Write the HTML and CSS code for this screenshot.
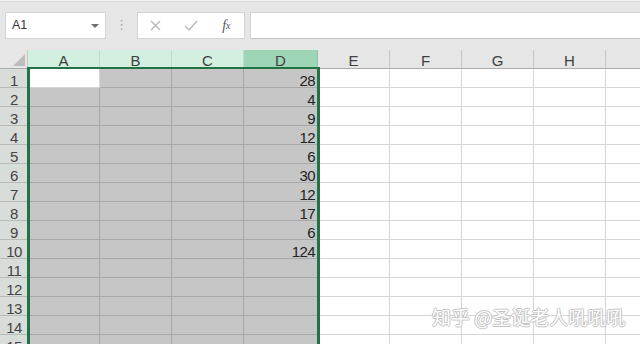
FILE: index.html
```html
<!DOCTYPE html>
<html lang="zh">
<head>
<meta charset="utf-8">
<title>Sheet</title>
<link rel="stylesheet" href="styles.css">
</head>
<body>
<div class="toolbar">
  <div class="namebox"><span class="ref">A1</span><span class="caret"></span></div>
  <div class="dots">⋮</div>
  <div class="fbtns">
    <span class="fb"><svg width="11" height="11" viewBox="0 0 11 11"><path d="M1 1L10 10M10 1L1 10" stroke="#b8b8b8" stroke-width="1.4" fill="none"/></svg></span>
    <span class="fb"><svg width="14" height="11" viewBox="0 0 14 11"><path d="M1 6L5 10L13 1" stroke="#b8b8b8" stroke-width="1.4" fill="none"/></svg></span>
    <span class="fb fx">f<sub>x</sub></span>
  </div>
  <div class="finput"></div>
</div>

<div class="sheet">
  <div class="row hdr">
    <div class="corner"><span class="tri"></span></div>
    <div class="ch g">A</div><div class="ch g">B</div><div class="ch g">C</div><div class="ch dg">D</div>
    <div class="ch">E</div><div class="ch">F</div><div class="ch">G</div><div class="ch">H</div><div class="ch last"></div>
  </div>
  <div class="row"><div class="rh">1</div><div class="cell"></div><div class="cell s"></div><div class="cell s"></div><div class="cell s num">28</div><div class="cell"></div><div class="cell"></div><div class="cell"></div><div class="cell"></div><div class="cell last"></div></div>
  <div class="row"><div class="rh">2</div><div class="cell s"></div><div class="cell s"></div><div class="cell s"></div><div class="cell s num">4</div><div class="cell"></div><div class="cell"></div><div class="cell"></div><div class="cell"></div><div class="cell last"></div></div>
  <div class="row"><div class="rh">3</div><div class="cell s"></div><div class="cell s"></div><div class="cell s"></div><div class="cell s num">9</div><div class="cell"></div><div class="cell"></div><div class="cell"></div><div class="cell"></div><div class="cell last"></div></div>
  <div class="row"><div class="rh">4</div><div class="cell s"></div><div class="cell s"></div><div class="cell s"></div><div class="cell s num">12</div><div class="cell"></div><div class="cell"></div><div class="cell"></div><div class="cell"></div><div class="cell last"></div></div>
  <div class="row"><div class="rh">5</div><div class="cell s"></div><div class="cell s"></div><div class="cell s"></div><div class="cell s num">6</div><div class="cell"></div><div class="cell"></div><div class="cell"></div><div class="cell"></div><div class="cell last"></div></div>
  <div class="row"><div class="rh">6</div><div class="cell s"></div><div class="cell s"></div><div class="cell s"></div><div class="cell s num">30</div><div class="cell"></div><div class="cell"></div><div class="cell"></div><div class="cell"></div><div class="cell last"></div></div>
  <div class="row"><div class="rh">7</div><div class="cell s"></div><div class="cell s"></div><div class="cell s"></div><div class="cell s num">12</div><div class="cell"></div><div class="cell"></div><div class="cell"></div><div class="cell"></div><div class="cell last"></div></div>
  <div class="row"><div class="rh">8</div><div class="cell s"></div><div class="cell s"></div><div class="cell s"></div><div class="cell s num">17</div><div class="cell"></div><div class="cell"></div><div class="cell"></div><div class="cell"></div><div class="cell last"></div></div>
  <div class="row"><div class="rh">9</div><div class="cell s"></div><div class="cell s"></div><div class="cell s"></div><div class="cell s num">6</div><div class="cell"></div><div class="cell"></div><div class="cell"></div><div class="cell"></div><div class="cell last"></div></div>
  <div class="row"><div class="rh">10</div><div class="cell s"></div><div class="cell s"></div><div class="cell s"></div><div class="cell s num">124</div><div class="cell"></div><div class="cell"></div><div class="cell"></div><div class="cell"></div><div class="cell last"></div></div>
  <div class="row"><div class="rh">11</div><div class="cell s"></div><div class="cell s"></div><div class="cell s"></div><div class="cell s"></div><div class="cell"></div><div class="cell"></div><div class="cell"></div><div class="cell"></div><div class="cell last"></div></div>
  <div class="row"><div class="rh">12</div><div class="cell s"></div><div class="cell s"></div><div class="cell s"></div><div class="cell s"></div><div class="cell"></div><div class="cell"></div><div class="cell"></div><div class="cell"></div><div class="cell last"></div></div>
  <div class="row"><div class="rh">13</div><div class="cell s"></div><div class="cell s"></div><div class="cell s"></div><div class="cell s"></div><div class="cell"></div><div class="cell"></div><div class="cell"></div><div class="cell"></div><div class="cell last"></div></div>
  <div class="row"><div class="rh">14</div><div class="cell s"></div><div class="cell s"></div><div class="cell s"></div><div class="cell s"></div><div class="cell"></div><div class="cell"></div><div class="cell"></div><div class="cell"></div><div class="cell last"></div></div>
  <div class="row"><div class="rh">15</div><div class="cell s"></div><div class="cell s"></div><div class="cell s"></div><div class="cell s"></div><div class="cell"></div><div class="cell"></div><div class="cell"></div><div class="cell"></div><div class="cell last"></div></div>
  <div class="selection"></div>
</div>

<div class="watermark">知乎 @圣诞老人吼吼吼</div>
</body>
</html>
```

FILE: styles.css
```css
* { box-sizing: border-box; }
html, body { margin: 0; padding: 0; }
body {
  width: 640px;
  height: 344px;
  overflow: hidden;
  position: relative;
  background: #fff;
  font-family: "Liberation Sans", Arial, sans-serif;
  color: #333;
}

.toolbar {
  height: 50px;
  padding: 12px 0 0 5px;
  display: flex;
  align-items: flex-start;
  background: linear-gradient(#f2f2f2 0 1px, #d6d6d6 1px 2px, #e6e6e6 2px);
}
.namebox {
  width: 101px;
  height: 27px;
  background: #fff;
  border: 1px solid #d4d4d4;
  display: flex;
  align-items: center;
  justify-content: space-between;
  padding: 0 6px 1px 6px;
}
.ref { font-size: 12.5px; color: #333; }
.caret {
  width: 0; height: 0;
  border-left: 4px solid transparent;
  border-right: 4px solid transparent;
  border-top: 4px solid #6f6f6f;
  margin-top: 1px;
}
.dots {
  width: 31px;
  height: 27px;
  text-align: center;
  line-height: 26px;
  font-family: "DejaVu Sans", sans-serif;
  font-size: 13px;
  color: #a8a8a8;
}
.fbtns {
  width: 108px;
  height: 27px;
  background: #fff;
  border: 1px solid #d4d4d4;
  display: flex;
  align-items: center;
}
.fb {
  width: 36px;
  display: flex;
  justify-content: center;
  align-items: center;
}
.fx {
  font-family: "Liberation Serif", serif;
  font-style: italic;
  font-size: 14px;
  color: #555;
  line-height: 14px;
}
.fx sub { font-size: 10px; vertical-align: -1px; }
.finput {
  flex: 1;
  height: 27px;
  margin-left: 5px;
  background: #fff;
  border: 1px solid #d4d4d4;
  border-right: none;
  border-bottom-color: #c4c4c4;
}

.sheet { position: relative; }
.row {
  display: grid;
  grid-template-columns: 28px 72px 72px 72px 74px 72px 72px 72px 72px 1fr;
  height: 19px;
}
.corner {
  background: #e6e6e6;
  border-right: 1px solid #c6c6c6;
  border-bottom: 1px solid #ababab;
  position: relative;
}
.tri {
  position: absolute;
  right: 2px;
  bottom: 2px;
  width: 0; height: 0;
  border-left: 12px solid transparent;
  border-bottom: 12px solid #bdbdbd;
}
.ch {
  background: #e6e6e6;
  border-right: 1px solid #c6c6c6;
  border-bottom: 1px solid #ababab;
  display: flex;
  align-items: flex-end;
  justify-content: center;
  font-size: 15px;
  line-height: 13px;
  padding-bottom: 1px;
  color: #404040;
}
.ch.g { background: #d3efdf; border-right-color: #bfdccb; }
.ch.dg { background: #9fd5b7; border-right-color: #8cc5a5; }
.ch.last { border-right: none; }

.rh {
  background: #d9ddd9;
  border-bottom: 1px solid #b8bcb8;
  display: flex;
  align-items: flex-end;
  justify-content: center;
  font-size: 15px;
  line-height: 13px;
  letter-spacing: -0.5px;
  color: #444;
}
.cell {
  background: #fff;
  border-right: 1px solid #d6d6d6;
  border-bottom: 1px solid #d6d6d6;
}
.cell.s {
  background: #c6c6c6;
  border-right-color: #a9a9a9;
  border-bottom-color: #a9a9a9;
}
.cell.last { border-right: none; }
.num {
  display: flex;
  align-items: flex-end;
  justify-content: flex-end;
  padding-right: 2px;
  font-size: 15px;
  line-height: 13px;
  letter-spacing: -0.6px;
  color: #222;
}

.selection {
  position: absolute;
  left: 27px;
  top: 17px;
  width: 293px;
  height: 320px;
  border-style: solid;
  border-color: #217346;
  border-width: 2px 3px;
  pointer-events: none;
}

.watermark {
  position: absolute;
  left: 432px;
  top: 305px;
  font-family: "Noto Sans CJK SC", sans-serif;
  font-size: 19px;
  line-height: 24px;
  color: #fff;
  white-space: nowrap;
  text-shadow: 1px 0 0 #c4c4c4, -1px 0 0 #c4c4c4, 0 1px 0 #c4c4c4, 0 -1px 0 #c4c4c4;
}
```
